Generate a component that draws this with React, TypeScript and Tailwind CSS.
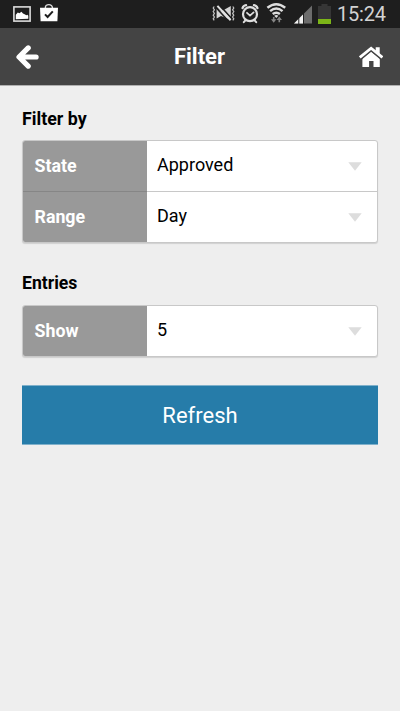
const filterRows = [
  { label: "State", value: "Approved" },
  { label: "Range", value: "Day" },
];

const entryRows = [{ label: "Show", value: "5" }];

function StatusBar() {
  return (
    <div className="flex h-7 items-center justify-between bg-[#1e1e1e] pr-[14px] pl-[13px]">
      {/* Notifications */}
      <div className="flex h-7 items-center">
        <svg width="18" height="28" viewBox="13 0 18 28">
          <rect x="13.9" y="6.9" width="16.2" height="14.2" fill="#1e1e1e" stroke="#dcdcdc" strokeWidth="1.6" />
          <path d="M15.8 19.2v-4.4l2-2.4 1.6.8 2-1.4 1.6 1.6 1.6.8 1.8 1 1-.4.9 1v3z" fill="#fff" />
        </svg>
        <svg className="ml-[9px]" width="18" height="28" viewBox="40 0 18 28">
          <path d="M45.4 9V7.6a3.5 3 0 0 1 7 0V9" fill="none" stroke="#dcdcdc" strokeWidth="1.4" />
          <path d="M40 7.8h18l-.6 13.4H40.6z" fill="#fff" />
          <path d="M45 14.4l2.6 2.6 5.2-5.6" fill="none" stroke="#1e1e1e" strokeWidth="2" />
        </svg>
      </div>

      {/* System indicators */}
      <div className="flex h-7 items-center">
        <svg width="120" height="28" viewBox="212 0 120 28">
          {/* Vibrate */}
          <g fill="none" stroke="#c4c4c4" strokeWidth="1.2">
            <path d="M214.2 6.5l-1 1.5 1.2 1.8-1.2 1.8 1.2 1.8-1.2 1.8 1.2 1.8-1.2 1.8 1 1.5" />
            <path d="M232.8 6.5l1 1.5-1.2 1.8 1.2 1.8-1.2 1.8 1.2 1.8-1.2 1.8 1.2 1.8-1 1.5" />
          </g>
          <path d="M216.6 8.5l4.4 3 9.8-5.5v14l-9.8-4-4.4 2.5z" fill="#d4d4d4" />
          <path d="M219 4.5l12.6 14" stroke="#1e1e1e" strokeWidth="1.6" />
          <path d="M216 7.5l12.8 14" stroke="#1e1e1e" strokeWidth="1.6" />
          <path d="M217.4 5.9l13.2 14.4" stroke="#e2e2e2" strokeWidth="2" />
          {/* Alarm */}
          <g fill="none" stroke="#dedede" strokeLinecap="round">
            <circle cx="250" cy="14.2" r="7" strokeWidth="2.2" />
            <path d="M247 12.8l3 2.8 3.6-3.2" strokeWidth="1.8" />
            <path d="M242.6 8q.8-2.6 3.4-2.9M257.4 8q-.8-2.6-3.4-2.9" strokeWidth="2.4" />
            <path d="M245.2 20.6l-1.4 1.6M254.8 20.6l1.4 1.6" strokeWidth="2" />
          </g>
          {/* Wi-Fi */}
          <g fill="none" stroke="#dedede" strokeWidth="2.5">
            <path d="M267.4 7.8q8.9-7 17.8 0" />
            <path d="M270.1 11.1q6.2-5.1 12.4 0" />
            <path d="M272.7 14.1q3.6-2.7 7.2 0" />
          </g>
          <path d="M274.2 15.8q2.1-1.4 4.2 0l-2.1 2.3z" fill="#dedede" />
          <path d="M273.7 17v4M279.3 22.2v-4" stroke="#858585" strokeWidth="1.6" />
          <path d="M271 19.2h5.4l-2.7 3.6zM276.6 20h5.4l-2.7-3.6z" fill="#858585" />
          {/* Signal */}
          <path d="M294 23.5L312 5.5v18z" fill="#6c6c6c" />
          <path d="M294 23.5L303 14.5v9z" fill="#f1f1f1" />
          <path d="M298.8 17v7M303.5 12v12" stroke="#1e1e1e" strokeWidth="1" />
          {/* Battery */}
          <path d="M318 6h3.5V4h6v2h3.5v13h-13z" fill="#363636" />
          <path d="M318 19h13v5h-13z" fill="#7cb518" />
        </svg>
        <span className="ml-[5px] w-[49px] text-[20px] leading-7 tracking-[-0.2px] whitespace-nowrap text-[#d2d2d2]">15:24</span>
      </div>
    </div>
  );
}

function Header() {
  return (
    <header className="flex h-[58px] items-center justify-between border-b border-[#b0b0b0] bg-[#444] pt-px pr-[17px] pl-4">
      <button className="flex w-6 justify-center" aria-label="Back">
        <svg width="24" height="26" viewBox="16 45 24 26">
          <path d="M28.2 48.9L19 58l9.2 9.1M20 58h16.1" fill="none" stroke="#fff" strokeWidth="5.2" strokeLinecap="round" strokeLinejoin="round" />
        </svg>
      </button>
      <h1 className="text-[22px] leading-7 font-bold text-white">Filter</h1>
      <button aria-label="Home">
        <svg width="24" height="22" viewBox="359 46 24 22" fill="#fff">
          <path d="M362.4 58.4l8.7-7 8.7 7v8.6h-6.3v-6h-4.4v6h-6.7z" />
          <path d="M360.3 58.2l10.8-9 10.8 9" fill="none" stroke="#444" strokeWidth="3.8" />
          <path d="M359.8 57.4l11.3-9.2 11.3 9.2" fill="none" stroke="#fff" strokeWidth="2.8" />
          <path d="M375.7 47.2h4v7.2l-4-3.5z" />
        </svg>
      </button>
    </header>
  );
}

function SelectGroup({ rows }: { rows: { label: string; value: string }[] }) {
  return (
    <div className="overflow-hidden rounded-[3px] border border-[#c8c8c8] bg-white shadow-[0_1px_1px_#d0d0d0]">
      {rows.map((row, idx) => (
        <div key={row.label} className="flex h-[50px] not-first:h-[51px] not-first:border-t not-first:border-[#c8c8c8]">
          <div
            className={
              idx > 0
                ? "-mt-px w-[124px] border-t border-[#868686] bg-[#999] pl-[11.5px] text-[17.8px] leading-[50px] font-bold text-white"
                : "w-[124px] bg-[#999] pl-[11.5px] text-[17.8px] leading-[50px] font-bold text-white"
            }
          >
            {row.label}
          </div>
          <div className="flex flex-1 items-center justify-between pr-[15px] pl-[10px]">
            <span className="-mt-[2px] text-[18px] leading-[48px] text-black">{row.value}</span>
            <svg width="14" height="9" viewBox="0 0 14 9">
              <path d="M.3.3h13.4L7 8.7z" fill="#ddd" />
            </svg>
          </div>
        </div>
      ))}
    </div>
  );
}

export default function App() {
  return (
    <div className="min-h-[711px] w-full bg-[#eee] font-[Roboto,sans-serif]">
      <StatusBar />
      <Header />
      <main className="px-[22px] pt-[21px]">
        <h2 className="mb-[9px] text-[17.8px] leading-6 font-bold text-black">Filter by</h2>
        <SelectGroup rows={filterRows} />
        <h2 className="mt-[28px] mb-[10px] text-[17.6px] leading-6 font-bold text-black">Entries</h2>
        <SelectGroup rows={entryRows} />
        <button className="mt-[28px] block h-[60px] w-full border-y border-[#7fb0ca] bg-[#267ca9] text-[22px] text-white">
          Refresh
        </button>
      </main>
    </div>
  );
}
